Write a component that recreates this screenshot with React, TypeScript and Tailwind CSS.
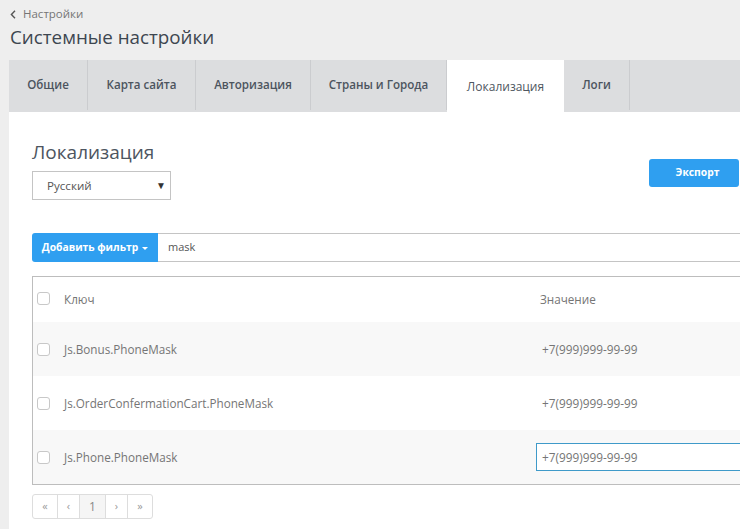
import React from "react";

const tabs = [
  { label: "Общие", w: "w-[79px]" },
  { label: "Карта сайта", w: "w-[108px]" },
  { label: "Авторизация", w: "w-[115px]" },
  { label: "Страны и Города", w: "w-[136px]" },
  { label: "Локализация", w: "w-[117px]", active: true },
  { label: "Логи", w: "w-[66px]" },
];

const rows = [
  { key: "Js.Bonus.PhoneMask", shaded: true },
  { key: "Js.OrderConfermationCart.PhoneMask", shaded: false },
  { key: "Js.Phone.PhoneMask", shaded: true, editing: true },
];

function Box({ className }: { className: string }) {
  return <div className={"h-[13px] w-[13px] shrink-0 rounded-[3px] border border-[#c8c8c8] bg-white " + className} />;
}

export default function App() {
  return (
    <div className="h-[529px] w-[740px] overflow-hidden bg-[#eeeeee] font-['Open_Sans',sans-serif] text-[12px]">
      <div className="h-[60px] pl-[10px] pt-[6px]">
        <div className="flex h-[16px] items-center gap-[7px] text-[11.5px] text-[#757575]">
          <svg width="6" height="9" viewBox="0 0 6 9" fill="none" stroke="#555" strokeWidth="1.4"><path d="M5 .8 1.4 4.5 5 8.2" /></svg>
          <span>Настройки</span>
        </div>
        <h1 className="mt-[2px] text-[18.8px] leading-[26px] font-normal text-[#3d4650]">Системные настройки</h1>
      </div>
      <div className="ml-[9px] h-[469px] bg-white">
        <div className="flex h-[52px] bg-[#dcdddf]">
          {tabs.map((t) => (
            <div
              key={t.label}
              className={
                "flex shrink-0 items-center justify-center " +
                t.w +
                (t.active
                  ? " bg-white pt-[2px] text-[12px] text-[#4e5660]"
                  : " mb-[2px] border-r border-[#cbcccf] text-[11.6px] font-semibold text-[#4c545e]")
              }
            >
              {t.label}
            </div>
          ))}
        </div>
        <div className="pl-[23px]">
          <div className="flex h-[88px] items-start">
            <div className="w-[617px] pt-[27px]">
              <div className="text-[19px] leading-[26px] text-[#4d5560]">Локализация</div>
              <div className="mt-[6px] flex h-[29px] w-[139px] items-center justify-between border border-[#c4c4c4] pl-[14px] pr-[4px] text-[11.6px] text-[#555]">
                <span>Русский</span>
                <span className="text-[10px] text-[#333]">▼</span>
              </div>
            </div>
            <div className="mt-[47px] flex h-[28px] w-[90px] items-center justify-center rounded-[3px] bg-[#2f9ff0] pl-[7px] text-[10.3px] font-bold text-white">
              Экспорт
            </div>
          </div>
          <div className="mt-[33px] flex h-[29px]">
            <div className="flex w-[126px] shrink-0 items-center justify-center gap-[4px] rounded-l-[3px] bg-[#2f9ff0] text-[10.3px] font-bold text-white">
              Добавить фильтр
              <span className="mt-[1px] h-0 w-0 border-x-[3.5px] border-t-[3.5px] border-x-transparent border-t-white" />
            </div>
            <div className="flex flex-1 items-center border-y border-[#c4c4c4] pl-[10px] text-[11px] text-[#555]">mask</div>
          </div>
          <div className="mt-[14px] h-[209px] border-y border-l border-[#bdbdbd] text-[11.7px] text-[#757575]">
            <div className="flex h-[45px] items-center">
              <Box className="mb-[2px] ml-[4px]" />
              <div className="ml-[14px] w-[476px] shrink-0">Ключ</div>
              <div>Значение</div>
            </div>
            {rows.map((r) => (
              <div key={r.key} className={"flex h-[54px] items-center " + (r.shaded ? "bg-[#f8f8f8]" : "bg-white")}>
                <Box className="ml-[4px]" />
                <div className="ml-[14px] w-[472px] shrink-0 pt-[2px]">{r.key}</div>
                {r.editing ? (
                  <div className="flex h-[28px] w-[230px] shrink-0 items-center border border-[#3f9ac9] bg-white pl-[5px] pt-[2px] text-[11.8px]">+7(999)999-99-99</div>
                ) : (
                  <div className="pl-[6px] pt-[2px] text-[11.8px]">+7(999)999-99-99</div>
                )}
              </div>
            ))}
          </div>
          <div className="mt-[9px] flex h-[25px] w-[121px] overflow-hidden rounded-[3px] border border-[#dddddd] text-[#999]">
            <div className="flex w-[25px] items-center justify-center border-r border-[#dddddd] text-[11px]">«</div>
            <div className="flex w-[22px] items-center justify-center border-r border-[#dddddd] text-[11px]">‹</div>
            <div className="flex w-[26px] items-center justify-center border-r border-[#dddddd] bg-[#f5f5f5] text-[12px] text-[#888]">1</div>
            <div className="flex w-[22px] items-center justify-center border-r border-[#dddddd] text-[11px]">›</div>
            <div className="flex flex-1 items-center justify-center text-[11px]">»</div>
          </div>
        </div>
      </div>
    </div>
  );
}
